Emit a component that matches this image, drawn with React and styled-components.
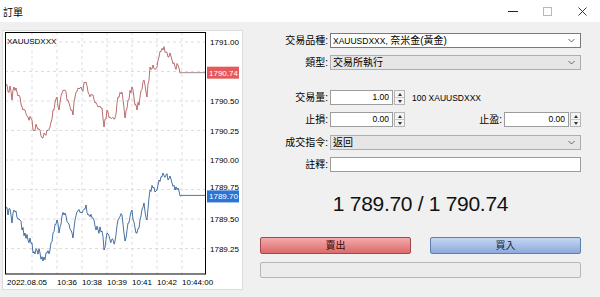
import React from "react";
import styled, { createGlobalStyle } from "styled-components";

const GlobalStyle = createGlobalStyle`
  html, body {
    margin: 0;
    padding: 0;
    background: #f0f0f0;
  }
  body {
    font-family: "Liberation Sans", "Noto Sans CJK TC", sans-serif;
    color: #000;
  }
`;

const Window = styled.div`
  width: 600px;
  height: 297px;
  overflow: hidden;
  background: #f0f0f0;
  display: flex;
  flex-direction: column;
`;

const TitleBar = styled.div`
  height: 22px;
  background: #fff;
  display: flex;
  align-items: center;
  justify-content: space-between;
  flex-shrink: 0;
`;

const Title = styled.div`
  padding-left: 3px;
  font-size: 10px;
  font-family: "Noto Sans CJK TC", sans-serif;
`;

const Controls = styled.div`
  display: flex;
  height: 100%;
`;

const ControlButton = styled.div`
  width: 35px;
  height: 100%;
  display: flex;
  align-items: center;
  justify-content: center;
  color: ${(p) => (p.$dim ? "#b8b8b8" : "#222")};
`;

const Body = styled.div`
  display: flex;
  padding-top: 8px;
`;

const ChartPanel = styled.div`
  margin-left: 2px;
  width: 241px;
  height: 260px;
  box-sizing: border-box;
  background: #fff;
  border: 1px solid #dcdcdc;
  flex-shrink: 0;
  overflow: hidden;

  svg {
    display: block;
    margin: -1px;
  }
`;

const Form = styled.div`
  margin-left: 17px;
  width: 321px;
  padding-top: 3px;
  display: flex;
  flex-direction: column;
`;

const Row = styled.div`
  display: flex;
  align-items: center;
  height: 15px;
  margin-top: ${(p) => p.$top || 0}px;
`;

const FieldLabel = styled.div`
  width: 68px;
  margin-right: 2px;
  text-align: right;
  font-size: 10px;
  line-height: 15px;
  white-space: nowrap;
  flex-shrink: 0;
`;

const InlineLabel = styled(FieldLabel)`
  width: auto;
  margin-left: auto;
`;

const Combo = styled.div`
  flex: 1;
  height: 15px;
  box-sizing: border-box;
  border: 1px solid ${(p) => (p.$list ? "#adadad" : "#7a7a7a")};
  background: ${(p) => (p.$list ? "#e6e6e6" : "#fff")};
  display: flex;
  align-items: center;
  padding: 0 5px 0 2px;
  font-size: 10px;
  white-space: nowrap;
`;

const ComboText = styled.span`
  flex: 1;
  line-height: 13px;
`;

const Latin = styled.span`
  font-size: 8.5px;
`;

const TextBox = styled.div`
  width: ${(p) => (p.$width ? `${p.$width}px` : "auto")};
  flex: ${(p) => (p.$width ? "none" : 1)};
  height: 15px;
  box-sizing: border-box;
  border: 1px solid #9c9c9c;
  background: #fff;
  font-size: 8.5px;
  line-height: 13px;
  text-align: right;
  padding-right: 3px;
`;

const Spinner = styled.div`
  width: 11px;
  height: 15px;
  margin-left: 1px;
  box-sizing: border-box;
  border: 1px solid #b4b4b4;
  background: #f4f4f4;
  display: flex;
  flex-direction: column;
`;

const SpinHalf = styled.div`
  flex: 1;
  display: flex;
  align-items: center;
  justify-content: center;
  border-top: ${(p) => (p.$down ? "1px solid #c8c8c8" : "none")};

  &::after {
    content: "";
    border-left: 2.5px solid transparent;
    border-right: 2.5px solid transparent;
    ${(p) =>
      p.$down
        ? "border-top: 3px solid #333;"
        : "border-bottom: 3px solid #333;"}
  }
`;

const Units = styled.span`
  margin-left: 7px;
  font-size: 8.5px;
`;

const PriceDisplay = styled.div`
  margin-top: 20px;
  height: 24px;
  display: flex;
  justify-content: center;
`;

const PriceText = styled.span`
  font-size: 21px;
  line-height: 24px;
  color: #111;
  letter-spacing: -0.3px;
`;

const ButtonRow = styled.div`
  margin-top: 21px;
  display: flex;
  justify-content: space-between;
`;

const TradeButton = styled.div`
  width: 151px;
  height: 17px;
  box-sizing: border-box;
  border-radius: 2px;
  border: 1px solid ${(p) => (p.$buy ? "#5f7fae" : "#a24a4a")};
  background: ${(p) =>
    p.$buy
      ? "linear-gradient(#c4d6f2, #8eaadb)"
      : "linear-gradient(#f4aaaa, #dc6a6a)"};
  font-size: 10px;
  line-height: 15px;
  text-align: center;
  color: ${(p) => (p.$buy ? "#0c1c3c" : "#3a0a0a")};
`;

const Progress = styled.div`
  margin-top: 8px;
  height: 16px;
  box-sizing: border-box;
  border: 1px solid #b6b6b6;
  border-radius: 2px;
  background: #ececec;
`;

const redKeys = [
  [6, 85], [8, 92], [10, 86], [12, 100], [13, 90], [16, 88], [18, 96], [20, 97],
  [22, 107], [25, 110], [28, 117], [32, 120], [33, 130], [37, 127], [40, 130],
  [43, 138], [47, 130], [50, 127], [53, 110], [57, 97], [59, 110], [62, 93],
  [65, 90], [68, 100], [72, 110], [73, 115], [75, 97], [78, 88], [82, 90],
  [86, 82], [88, 92], [92, 95], [95, 103], [98, 107], [102, 108], [104, 127],
  [107, 110], [110, 117], [115, 118], [118, 97], [122, 92], [125, 118],
  [128, 100], [132, 87], [135, 105], [137, 110], [140, 97], [144, 80],
  [147, 97], [150, 67], [153, 65], [157, 67], [159, 57], [163, 50], [166, 52],
  [168, 57], [170, 53], [172, 60], [175, 67], [178, 65], [180, 73], [181, 73],
];

// jagged tick line through the key points
function tickPath(keys, dy, seed) {
  let s = seed;
  const rnd = () => {
    s = (s * 16807) % 2147483647;
    return s / 2147483647 - 0.5;
  };
  const pts = [];
  keys.forEach(([x, y], i) => {
    if (i > 0) {
      const [px, py] = keys[i - 1];
      const n = Math.max(1, Math.round((x - px) / 0.9));
      for (let k = 1; k < n; k++) {
        const t = k / n;
        pts.push([px + (x - px) * t, py + (y - py) * t + rnd() * 8]);
      }
    }
    pts.push([x, y]);
  });
  return pts
    .map(([x, y], i) => `${i ? "L" : "M"}${x.toFixed(1)} ${(y + dy).toFixed(1)}`)
    .join(" ");
}

const priceY = (p) => 42 + (1791 - p) * 118;
const gridPrices = [1791, 1790.75, 1790.5, 1790.25, 1790, 1789.75, 1789.5, 1789.25];
const axisLabels = [1791, 1790.5, 1790.25, 1790, 1789.75, 1789.5, 1789.25];
const gridX = [32, 57, 82, 107, 132, 157, 182];
const times = [
  [7, "2022.08.05"], [57, "10:36"], [82, "10:38"], [107, "10:39"],
  [132, "10:41"], [157, "10:42"], [182, "10:44:00"],
];

const Chart = () => {
  const ask = priceY(1790.74);
  const bid = priceY(1789.7);
  const label = { fontSize: 8, fontFamily: "Liberation Sans, sans-serif" };
  return (
    <svg width="241" height="260" viewBox="2 30 241 260">
      {gridPrices.map((p) => (
        <line key={p} x1="5" x2="205" y1={priceY(p)} y2={priceY(p)}
          stroke="#d4d4d4" strokeWidth="0.8" strokeDasharray="3 3" />
      ))}
      {gridX.map((x) => (
        <line key={x} x1={x} x2={x} y1="32" y2="274"
          stroke="#d4d4d4" strokeWidth="0.8" strokeDasharray="3 3" />
      ))}
      <text x="7" y="44" style={label}>XAUUSDXXX</text>
      <path d={tickPath(redKeys, 0, 7)} fill="none" stroke="#a84a4a" strokeWidth="0.8" />
      <line x1="181" x2="205" y1={ask} y2={ask} stroke="#a88a8a" strokeWidth="1" />
      <path d={tickPath(redKeys, 123, 31)} fill="none" stroke="#1c4f8c" strokeWidth="0.8" />
      <line x1="181" x2="205" y1={bid} y2={bid} stroke="#4a78a8" strokeWidth="1" />
      <rect x="5.5" y="32.5" width="200" height="241.5" fill="none" stroke="#000" strokeWidth="1" />
      {axisLabels.map((p) => (
        <text key={p} x="210" y={priceY(p) + (p === 1789.75 ? 0 : 3)} style={label}>
          {p.toFixed(2)}
        </text>
      ))}
      <rect x="207" y={ask - 6} width="32" height="12" fill="#e45a5a" />
      <text x="209" y={ask + 3} style={label} fill="#fff">1790.74</text>
      <rect x="207" y={bid - 5} width="32" height="12" fill="#2a74d4" />
      <text x="209" y={bid + 4} style={label} fill="#fff">1789.70</text>
      {times.map(([x, t]) => (
        <text key={t} x={x} y="285" style={label}>{t}</text>
      ))}
    </svg>
  );
};

const Chevron = () => (
  <svg width="7" height="5" viewBox="0 0 7 5">
    <polyline points="0.5,1 3.5,4 6.5,1" fill="none" stroke="#555" strokeWidth="0.9" />
  </svg>
);

const SpinBox = () => (
  <Spinner>
    <SpinHalf />
    <SpinHalf $down />
  </Spinner>
);

export default function App() {
  return (
    <Window>
      <GlobalStyle />
      <TitleBar>
        <Title>訂單</Title>
        <Controls>
          <ControlButton>
            <svg width="10" height="10" viewBox="0 0 10 10">
              <line x1="0" x2="10" y1="5.5" y2="5.5" stroke="#222" strokeWidth="1" />
            </svg>
          </ControlButton>
          <ControlButton $dim>
            <svg width="9" height="9" viewBox="0 0 9 9">
              <rect x="0.5" y="0.5" width="8" height="8" fill="none" stroke="#b8b8b8" strokeWidth="1" />
            </svg>
          </ControlButton>
          <ControlButton>
            <svg width="9" height="9" viewBox="0 0 9 9">
              <path d="M0.5 0.5 L8.5 8.5 M8.5 0.5 L0.5 8.5" stroke="#222" strokeWidth="0.9" />
            </svg>
          </ControlButton>
        </Controls>
      </TitleBar>
      <Body>
        <ChartPanel>
          <Chart />
        </ChartPanel>
        <Form>
          <Row>
            <FieldLabel>交易品種:</FieldLabel>
            <Combo>
              <ComboText>
                <Latin>XAUUSDXXX, </Latin>奈米金(黃金)
              </ComboText>
              <Chevron />
            </Combo>
          </Row>
          <Row $top={7}>
            <FieldLabel>類型:</FieldLabel>
            <Combo $list>
              <ComboText>交易所執行</ComboText>
              <Chevron />
            </Combo>
          </Row>
          <Row $top={20}>
            <FieldLabel>交易量:</FieldLabel>
            <TextBox $width={63}>1.00</TextBox>
            <SpinBox />
            <Units>100 XAUUSDXXX</Units>
          </Row>
          <Row $top={7}>
            <FieldLabel>止損:</FieldLabel>
            <TextBox $width={63}>0.00</TextBox>
            <SpinBox />
            <InlineLabel>止盈:</InlineLabel>
            <TextBox $width={65}>0.00</TextBox>
            <SpinBox />
          </Row>
          <Row $top={8}>
            <FieldLabel>成交指令:</FieldLabel>
            <Combo $list>
              <ComboText>返回</ComboText>
              <Chevron />
            </Combo>
          </Row>
          <Row $top={7}>
            <FieldLabel>註釋:</FieldLabel>
            <TextBox />
          </Row>
          <PriceDisplay>
            <PriceText>1 789.70 / 1 790.74</PriceText>
          </PriceDisplay>
          <ButtonRow>
            <TradeButton>賣出</TradeButton>
            <TradeButton $buy>買入</TradeButton>
          </ButtonRow>
          <Progress />
        </Form>
      </Body>
    </Window>
  );
}
